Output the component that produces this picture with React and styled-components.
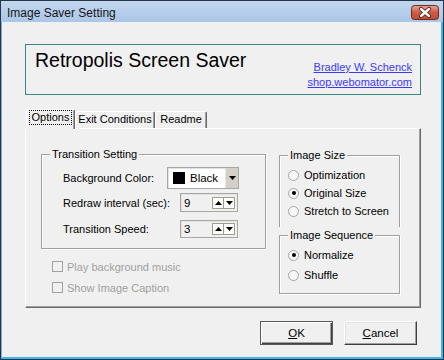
import React from 'react';
import styled, { createGlobalStyle } from 'styled-components';

const Global = createGlobalStyle`
  html, body { margin: 0; padding: 0; background: #f0f0f0; }
  body { width: 444px; height: 360px; overflow: hidden; font-family: "Liberation Sans", Arial, sans-serif; font-size: 11px; color: #000; }
  * { box-sizing: border-box; }
`;

const Window = styled.div`
  width: 444px;
  height: 360px;
  border: 1px solid #24354a;
  display: flex;
  flex-direction: column;
  background: #f0f0f0;
`;

const TitleBar = styled.div`
  height: 21px;
  flex: none;
  display: flex;
  justify-content: space-between;
  align-items: flex-start;
  background: linear-gradient(#c3d7ed, #aac6e6);
  padding: 0 4px 0 6px;
`;

const TitleText = styled.span`
  margin-top: 4px;
  font-size: 12px;
  line-height: 17px;
  color: #151515;
`;

const CloseButton = styled.svg`
  margin-top: 4px;
  display: block;
`;

const Frame = styled.div`
  flex: 1;
  display: flex;
  flex-direction: column;
  border-left: 1px solid #7eaedb;
  border-right: 2px solid #3fb5ea;
  border-bottom: 2px solid #3fb5ea;
  padding: 22px 20px 0 23px;
`;

const Header = styled.div`
  height: 51px;
  border: 1px solid #3d8483;
  display: flex;
  justify-content: space-between;
  padding: 3px 8px 4px 9px;
`;

const AppTitle = styled.div`
  font-family: "Comic Sans MS", "Liberation Sans", Arial, sans-serif;
  font-size: 19.5px;
  line-height: 24px;
  align-self: flex-start;
`;

const Links = styled.div`
  align-self: flex-end;
  display: flex;
  flex-direction: column;
  align-items: flex-end;
`;

const Link = styled.a`
  color: #3a3aff;
  text-decoration: underline;
  line-height: 15px;
  font-size: 11px;
`;

const TabRow = styled.div`
  margin: 14px 0 0 1px;
  height: 19px;
  display: flex;
  align-items: flex-end;
`;

const Tab = styled.div`
  position: relative;
  z-index: ${p => (p.$active ? 1 : 0)};
  width: ${p => p.$w}px;
  height: ${p => (p.$active ? 20 : 17)}px;
  margin-bottom: ${p => (p.$active ? -1 : 0)}px;
  border-top: 1px solid #fff;
  border-left: 1px solid #fff;
  border-right: 1px solid #696969;
  border-top-left-radius: 2px;
  border-top-right-radius: 2px;
  box-shadow: inset -1px 0 0 #a0a0a0;
  background: #f0f0f0;
  display: flex;
  justify-content: center;
  padding-top: ${p => (p.$active ? 1 : 1)}px;
  line-height: 13px;
`;

const Focus = styled.span`
  outline: 1px dotted #000;
  outline-offset: 0;
  padding: 0 2px;
  height: 13px;
`;

const Panel = styled.div`
  width: 396px;
  height: 180px;
  border-top: 1px solid #fff;
  border-left: 1px solid #fff;
  border-right: 1px solid #696969;
  border-bottom: 1px solid #696969;
  box-shadow: inset -1px -1px 0 #a0a0a0;
  display: flex;
  gap: 13px;
  padding: 25px 0 0 15px;
`;

const Column = styled.div`
  display: flex;
  flex-direction: column;
  margin-top: ${p => p.$mt || 0}px;
`;

const Group = styled.div`
  display: flex;
  flex-direction: column;
  width: ${p => p.$w}px;
  height: ${p => p.$h}px;
  margin-top: ${p => p.$mt || 0}px;
  border: 1px solid #a0a0a0;
  border-bottom: ${p => (p.$open ? 'none' : '1px solid #a0a0a0')};
  box-shadow: inset 1px 1px 0 #fff, 1px ${p => (p.$open ? 0 : 1)}px 0 #fff;
`;

const Legend = styled.span`
  align-self: flex-start;
  margin: -7px 0 0 8px;
  padding: 0 2px;
  background: #f0f0f0;
  line-height: 13px;
`;

const FieldRow = styled.div`
  display: flex;
  align-items: center;
  height: ${p => p.$h}px;
  margin-top: ${p => p.$mt}px;
  padding-left: 21px;
`;

const Label = styled.span`
  width: ${p => p.$w}px;
  flex: none;
`;

const Combo = styled.div`
  width: 72px;
  height: 22px;
  border: 1px solid #a6a6a6;
  box-shadow: inset 1px 1px 0 #e2e2e2;
  background: #fff;
  display: flex;
  align-items: center;
  padding-left: 5px;
`;

const Swatch = styled.span`
  width: 12px;
  height: 12px;
  background: #000;
  flex: none;
`;

const ComboText = styled.span`
  margin-left: 5px;
  flex: 1;
  font-size: 11.5px;
`;

const ComboButton = styled.span`
  width: 13px;
  align-self: stretch;
  background: #d4d0c8;
  border-left: 1px solid #e8e6e0;
  display: flex;
  align-items: center;
  justify-content: center;
`;

const Spin = styled.div`
  width: 58px;
  height: ${p => p.$h}px;
  border: 1px solid #a6a6a6;
  box-shadow: inset 1px 1px 0 #e2e2e2;
  display: flex;
  align-items: center;
  justify-content: space-between;
  padding: 0 2px 0 3px;
  font-size: 11.5px;
`;

const SpinButtons = styled.div`
  display: flex;
`;

const SpinBtn = styled.span`
  width: 12px;
  height: 12px;
  border: 1px solid #a29d8a;
  background: #fff;
  display: flex;
  align-items: center;
  justify-content: center;
  & + & { border-left: none; width: 11px; }
`;

const CheckRow = styled.div`
  display: flex;
  align-items: center;
  gap: 4px;
  height: 13px;
  margin: ${p => p.$mt}px 0 0 11px;
  color: #a0a0a0;
`;

const CheckBox = styled.span`
  width: 11px;
  height: 11px;
  border: 1px solid #a0a0a0;
  background: #f0f0f0;
  flex: none;
`;

const RadioRow = styled.div`
  display: flex;
  align-items: center;
  gap: 5px;
  height: 18px;
  margin-top: ${p => p.$mt || 0}px;
  padding-left: 8px;
`;

const RadioCircle = styled.span`
  width: 11px;
  height: 11px;
  border-radius: 50%;
  border: 1px solid #a6a6a6;
  background: #f7f7f7;
  flex: none;
  display: flex;
  align-items: center;
  justify-content: center;
  &::after {
    content: "";
    width: 4px;
    height: 4px;
    border-radius: 50%;
    background: ${p => (p.$on ? '#000' : 'transparent')};
  }
`;

const ButtonRow = styled.div`
  display: flex;
  justify-content: flex-end;
  gap: 11px;
  margin: 13px 4px 0 0;
`;

const Button = styled.div`
  width: 73px;
  height: 24px;
  display: flex;
  align-items: center;
  justify-content: center;
  background: #f0f0f0;
  border: 1px solid;
  border-color: ${p => (p.$default ? '#5a5a5a' : '#fff #404040 #404040 #fff')};
  box-shadow: ${p =>
    p.$default
      ? 'inset 1px 1px 0 #fff, inset -1px -1px 0 #404040, inset -2px -2px 0 #a0a0a0'
      : 'inset -1px -1px 0 #a0a0a0, inset 1px 1px 0 #e3e3e3'};
  font-size: 11.5px;
`;

const Arrow = ({ dir }) => (
  <svg width="7" height="4" viewBox="0 0 7 4">
    {dir === 'up' ? <polygon points="0,4 7,4 3.5,0" fill="#000" /> : <polygon points="0,0 7,0 3.5,4" fill="#000" />}
  </svg>
);

const SpinField = ({ value, h }) => (
  <Spin $h={h}>
    <span>{value}</span>
    <SpinButtons>
      <SpinBtn><Arrow dir="up" /></SpinBtn>
      <SpinBtn><Arrow dir="down" /></SpinBtn>
    </SpinButtons>
  </Spin>
);

const Radio = ({ on, children, mt }) => (
  <RadioRow $mt={mt}>
    <RadioCircle $on={on} />
    <span>{children}</span>
  </RadioRow>
);

export default function App() {
  return (
    <>
      <Global />
      <Window>
        <TitleBar>
          <TitleText>Image Saver Setting</TitleText>
          <CloseButton width="28" height="15" viewBox="0 0 28 15">
            <defs>
              <linearGradient id="cg" x1="0" y1="0" x2="0" y2="1">
                <stop offset="0" stopColor="#e6a698" />
                <stop offset="0.5" stopColor="#cf5a45" />
                <stop offset="1" stopColor="#c24c36" />
              </linearGradient>
            </defs>
            <rect x="0.5" y="0.5" width="27" height="14" rx="3" fill="url(#cg)" stroke="#6e2b20" />
            <path d="M10 4 L18 11 M18 4 L10 11" stroke="#5a1d12" strokeWidth="4.2" strokeLinecap="round" />
            <path d="M10 4 L18 11 M18 4 L10 11" stroke="#fff" strokeWidth="2.4" strokeLinecap="round" />
          </CloseButton>
        </TitleBar>
        <Frame>
          <Header>
            <AppTitle>Retropolis Screen Saver</AppTitle>
            <Links>
              <Link>Bradley W. Schenck</Link>
              <Link>shop.webomator.com</Link>
            </Links>
          </Header>
          <TabRow>
            <Tab $active $w={49}><Focus>Options</Focus></Tab>
            <Tab $w={80}>Exit Conditions</Tab>
            <Tab $w={52}>Readme</Tab>
          </TabRow>
          <Panel>
            <Column>
              <Group $w={225} $h={95}>
                <Legend>Transition Setting</Legend>
                <FieldRow $h={22} $mt={6}>
                  <Label $w={104}>Background Color:</Label>
                  <Combo>
                    <Swatch />
                    <ComboText>Black</ComboText>
                    <ComboButton><Arrow dir="down" /></ComboButton>
                  </Combo>
                </FieldRow>
                <FieldRow $h={19} $mt={4}>
                  <Label $w={117}>Redraw interval (sec):</Label>
                  <SpinField value="9" h={19} />
                </FieldRow>
                <FieldRow $h={18} $mt={8}>
                  <Label $w={117}>Transition Speed:</Label>
                  <SpinField value="3" h={18} />
                </FieldRow>
              </Group>
              <CheckRow $mt={11}>
                <CheckBox />
                <span>Play background music</span>
              </CheckRow>
              <CheckRow $mt={8}>
                <CheckBox />
                <span>Show Image Caption</span>
              </CheckRow>
            </Column>
            <Column $mt={1}>
              <Group $w={121} $h={72} $open>
                <Legend>Image Size</Legend>
                <Radio mt={4}>Optimization</Radio>
                <Radio on>Original Size</Radio>
                <Radio>Stretch to Screen</Radio>
              </Group>
              <Group $w={121} $h={59} $mt={8}>
                <Legend>Image Sequence</Legend>
                <Radio on mt={4}>Normalize</Radio>
                <Radio mt={2}>Shuffle</Radio>
              </Group>
            </Column>
          </Panel>
          <ButtonRow>
            <Button $default><span><u>O</u>K</span></Button>
            <Button><span><u>C</u>ancel</span></Button>
          </ButtonRow>
        </Frame>
      </Window>
    </>
  );
}
